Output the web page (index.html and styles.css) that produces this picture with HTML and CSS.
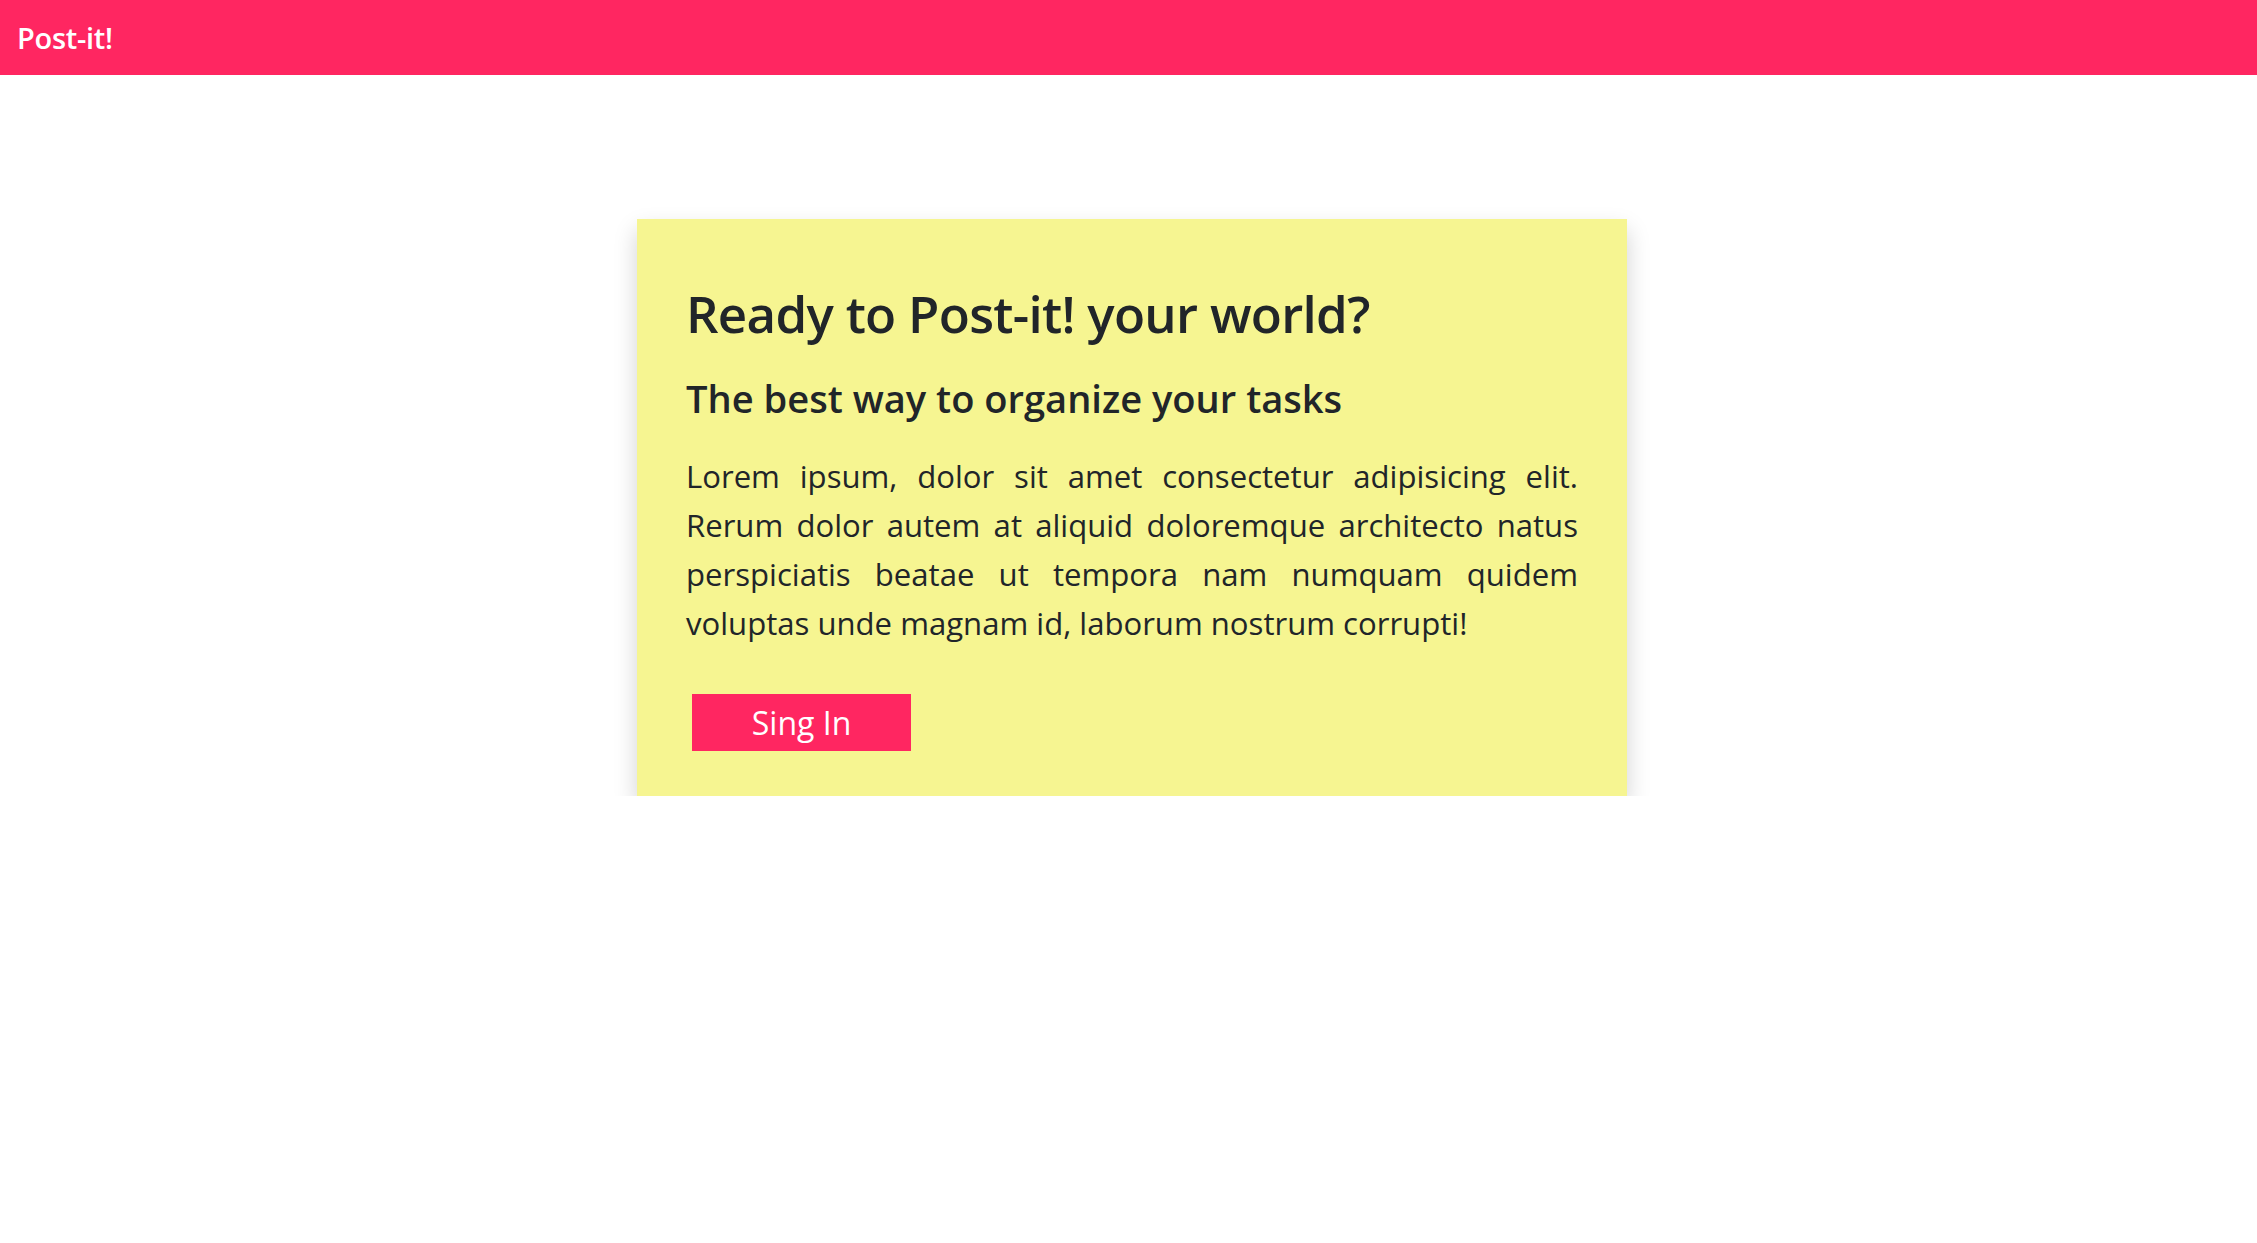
FILE: index.html
```html
<!DOCTYPE html>
<html lang="en">
<head>
<meta charset="utf-8">
<title>Post-it!</title>
<link rel="stylesheet" href="styles.css">
</head>
<body>
<header class="navbar">
  <a class="brand" href="#">Post-it!</a>
</header>
<main class="page">
  <section class="note">
    <h1 class="note-title">Ready to Post-it! your world?</h1>
    <h3 class="note-subtitle">The best way to organize your tasks</h3>
    <p class="note-text">Lorem ipsum, dolor sit amet consectetur adipisicing elit. Rerum dolor autem at aliquid doloremque architecto natus perspiciatis beatae ut tempora nam numquam quidem voluptas unde magnam id, laborum nostrum corrupti!</p>
    <a class="btn" href="#">Sing In</a>
  </section>
</main>
</body>
</html>
```
FILE: styles.css
```css
html, body {
  margin: 0;
  padding: 0;
  background: #ffffff;
}
body {
  font-family: "Open Sans", "Noto Sans", sans-serif;
  color: #212529;
}
.navbar {
  height: 75px;
  background: #ff2661;
  display: flex;
  align-items: center;
  padding-left: 17px;
}
.brand {
  color: #ffffff;
  text-decoration: none;
  font-size: 29px;
  font-weight: 600;
  letter-spacing: -0.3px;
}
.page {
  padding-top: 144px;
}
.note {
  box-sizing: border-box;
  width: 990px;
  margin-left: 637px;
  padding: 64px 49px 45px 49px;
  background: #f6f591;
  box-shadow: 0 11px 22px rgba(0, 0, 0, 0.18);
}
.note-title {
  margin: 0 0 33px 0;
  font-size: 51px;
  line-height: 60px;
  font-weight: 600;
  letter-spacing: -0.7px;
}
.note-subtitle {
  margin: 0 0 32px 0;
  font-size: 38.1px;
  line-height: 44px;
  font-weight: 600;
}
.note-text {
  margin: 0 0 46px 0;
  font-size: 31.1px;
  line-height: 49px;
  text-align: justify;
}
.btn {
  display: flex;
  align-items: center;
  justify-content: center;
  width: 219px;
  height: 57px;
  margin-left: 6px;
  background: #ff2661;
  color: #ffffff;
  text-decoration: none;
  font-size: 32px;
}
```
